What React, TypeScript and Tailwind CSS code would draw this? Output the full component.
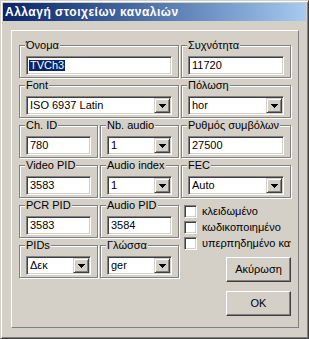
import type { ReactNode } from 'react'

function Group({ label, className = '', children }: { label: string; className?: string; children: ReactNode }) {
  return (
    <div
      className={`relative border border-[#808080] shadow-[inset_1px_1px_#fff,1px_1px_#fff] px-[6px] pt-[10px] ${className}`}
    >
      <span className="absolute -top-[7px] left-[5px] bg-[#d4d0c8] px-px leading-[13px] whitespace-nowrap">
        {label}
      </span>
      {children}
    </div>
  )
}

function Sunken({ children }: { children: ReactNode }) {
  return (
    <div className="h-[19px] flex items-center bg-white border border-t-[#808080] border-l-[#808080] border-r-white border-b-white shadow-[inset_1px_1px_#404040,inset_-1px_-1px_#d4d0c8]">
      {children}
    </div>
  )
}

function Field({ value, selected }: { value: string; selected?: boolean }) {
  return (
    <Sunken>
      <span
        className={`ml-[2px] px-px leading-[11px] ${selected ? 'bg-[#0a246a] text-white' : 'text-black'}`}
      >
        {value}
      </span>
    </Sunken>
  )
}

function Select({ value }: { value: string }) {
  return (
    <Sunken>
      <span className="ml-[3px] leading-[11px] flex-1">{value}</span>
      <div className="mr-px w-[16px] h-[15px] flex items-center justify-center bg-[#d4d0c8] border border-t-[#d4d0c8] border-l-[#d4d0c8] border-r-[#404040] border-b-[#404040] shadow-[inset_1px_1px_#fff,inset_-1px_-1px_#808080]">
        <svg width="7" height="4" viewBox="0 0 7 4">
          <path d="M0 0h7v1h-1v1h-1v1h-1v1h-1v-1h-1v-1h-1v-1h-1z" fill="#000" />
        </svg>
      </div>
    </Sunken>
  )
}

function Check({ label }: { label: string }) {
  return (
    <div className="h-[16px] flex items-start">
      <div className="w-[13px] h-[13px] shrink-0 bg-white border border-t-[#808080] border-l-[#808080] border-r-white border-b-white shadow-[inset_1px_1px_#404040,inset_-1px_-1px_#d4d0c8]" />
      <span className="ml-[5px] w-[95px] overflow-hidden whitespace-nowrap leading-[13px]">{label}</span>
    </div>
  )
}

function Button({ label }: { label: string }) {
  return (
    <button className="w-[65px] h-[25px] flex items-center justify-center bg-[#d4d0c8] border border-t-white border-l-white border-r-[#404040] border-b-[#404040] shadow-[inset_-1px_-1px_#808080] text-black">
      {label}
    </button>
  )
}

export default function App() {
  return (
    <div className="w-[309px] h-[339px] bg-[#d4d0c8] border border-t-[#d4d0c8] border-l-[#d4d0c8] border-r-[#404040] border-b-[#404040] shadow-[inset_1px_1px_#fff,inset_-1px_-1px_#808080] p-[2px] text-[11px] text-black font-['Liberation_Sans',Arial,sans-serif]">
      {/* Title bar */}
      <div className="h-[18px] flex items-center pl-[2px] bg-linear-to-r from-[#0a246a] to-[#a6caf0] text-white font-bold text-[12px] tracking-[0.5px]">
        Αλλαγή στοιχείων καναλιών
      </div>

      {/* Main panel */}
      <div className="ml-[8px] mt-[9px] w-[288px] h-[298px] border border-t-white border-l-white border-r-[#808080] border-b-[#808080] pl-[7px] pt-[14px]">
        <div className="grid grid-cols-[79px_79px_110px] grid-rows-[33px_33px_33px_33px_33px_33px] gap-x-[2px] gap-y-[7px]">
          <Group label="Όνομα" className="col-span-2">
            <Field value="TVCh3" selected />
          </Group>
          <Group label="Συχνότητα">
            <Field value="11720" />
          </Group>

          <Group label="Font" className="col-span-2">
            <Select value="ISO 6937 Latin" />
          </Group>
          <Group label="Πόλωση">
            <Select value="hor" />
          </Group>

          <Group label="Ch. ID">
            <Field value="780" />
          </Group>
          <Group label="Nb. audio">
            <Select value="1" />
          </Group>
          <Group label="Ρυθμός συμβόλων">
            <Field value="27500" />
          </Group>

          <Group label="Video PID">
            <Field value="3583" />
          </Group>
          <Group label="Audio index">
            <Select value="1" />
          </Group>
          <Group label="FEC">
            <Select value="Auto" />
          </Group>

          <Group label="PCR PID">
            <Field value="3583" />
          </Group>
          <Group label="Audio PID">
            <Field value="3584" />
          </Group>

          <div className="row-span-2 pl-[3px]">
            <Check label="κλειδωμένο" />
            <Check label="κωδικοποιημένο" />
            <Check label="υπερπηδημένο κανάλι" />
            <div className="ml-[42px] mt-[4px] flex flex-col gap-[9px]">
              <Button label="Ακύρωση" />
              <Button label="OK" />
            </div>
          </div>

          <Group label="PIDs">
            <Select value="Δεκ" />
          </Group>
          <Group label="Γλώσσα">
            <Select value="ger" />
          </Group>
        </div>
      </div>
    </div>
  )
}
